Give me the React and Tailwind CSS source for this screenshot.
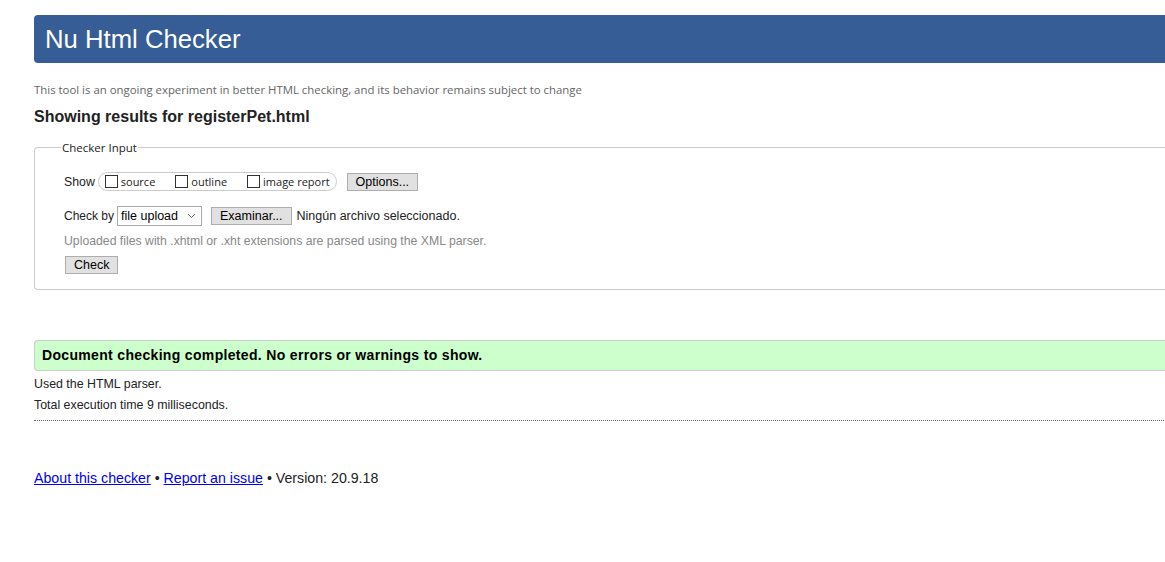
import React from 'react';

const arial = 'font-["Liberation_Sans",Arial,sans-serif]';
const segoe = 'font-["Open_Sans","Noto_Sans",sans-serif]';

const btnClass =
  'h-[18px] border border-[#adadad] bg-[#e1e1e1] px-[8px] text-[12.5px] leading-[16px] text-black';

function Box({ label }) {
  return (
    <label className="flex items-center gap-[3px]">
      <span className="inline-block h-[13px] w-[13px] border border-[#333] bg-white" />
      <span className={`${segoe} text-[11px] text-[#222]`}>{label}</span>
    </label>
  );
}

export default function App() {
  return (
    <div className={`h-[562px] w-[1165px] overflow-hidden bg-white ${arial}`}>
      <div className="w-[1200px] pl-[34px] pt-[15px]">
        <header className="flex h-[48px] items-center rounded-l-[4px] bg-[#365d95] pl-[11px] pt-[2px]">
          <h1 className="text-[25.7px] leading-none text-white">Nu Html Checker</h1>
        </header>

        <p className={`${segoe} mt-[18px] text-[11.4px] text-[#666]`}>
          This tool is an ongoing experiment in better HTML checking, and its behavior remains subject to change
        </p>
        <h2 className="mt-[7px] text-[16px] font-bold text-[#222]">Showing results for registerPet.html</h2>

        <fieldset className="mt-[10px] h-[151px] rounded-l-[4px] border border-r-0 border-[#ccc] pl-[29px]">
          <legend className={`${segoe} ml-[-3px] px-[1px] text-[11.5px] text-[#222]`}>Checker Input</legend>

          <div className="mt-[16px] flex items-center text-[12.3px] text-[#222]">
            <span>Show</span>
            <div className="ml-[3px] flex h-[19px] items-center gap-[20px] rounded-full border border-[#ccc] pl-[6px] pr-[6px]">
              <Box label="source" />
              <Box label="outline" />
              <Box label="image report" />
            </div>
            <button type="button" className={`${btnClass} ml-[10px]`}>Options...</button>
          </div>

          <div className="mt-[15px] flex items-center text-[12.5px] text-[#222]">
            <span className="text-[12px]">Check by</span>
            <div className="ml-[3px] flex h-[20px] w-[85px] items-center justify-between border border-[#aaa] bg-white pl-[3px] pr-[5px]">
              <span className="text-[12.5px] text-black">file upload</span>
              <svg width="9" height="6" viewBox="0 0 9 6" fill="none" stroke="#666" strokeWidth="1">
                <path d="M1 1l3.5 3.5L8 1" />
              </svg>
            </div>
            <button type="button" className={`${btnClass} ml-[9px]`}>Examinar...</button>
            <span className="ml-[5px]">Ningún archivo seleccionado.</span>
          </div>

          <p className="mt-[6px] text-[12.25px] text-[#888]">
            Uploaded files with .xhtml or .xht extensions are parsed using the XML parser.
          </p>

          <button type="button" className={`${btnClass} ml-[1px] mt-[5px] px-[7px]`}>Check</button>
        </fieldset>

        <div className="mt-[50px] flex h-[31px] items-center rounded-l-[4px] border border-r-0 border-[#ccc] bg-[#ccffcc] pl-[7px]">
          <p className="text-[14px] font-bold tracking-[0.33px] text-black">
            Document checking completed. No errors or warnings to show.
          </p>
        </div>

        <p className="mt-[4px] text-[12.4px] leading-[18px] text-[#222]">Used the HTML parser.</p>
        <p className="mt-[3px] text-[12.4px] leading-[18px] text-[#222]">Total execution time 9 milliseconds.</p>
        <div className="mt-[6px] border-t border-dotted border-[#666]" />

        <footer className="mt-[47px] text-[14.2px] text-[#222]">
          <a href="#" className="text-[#0000ee] underline">About this checker</a>
          {' • '}
          <a href="#" className="text-[#0000ee] underline">Report an issue</a>
          {' • Version: 20.9.18'}
        </footer>
      </div>
    </div>
  );
}
